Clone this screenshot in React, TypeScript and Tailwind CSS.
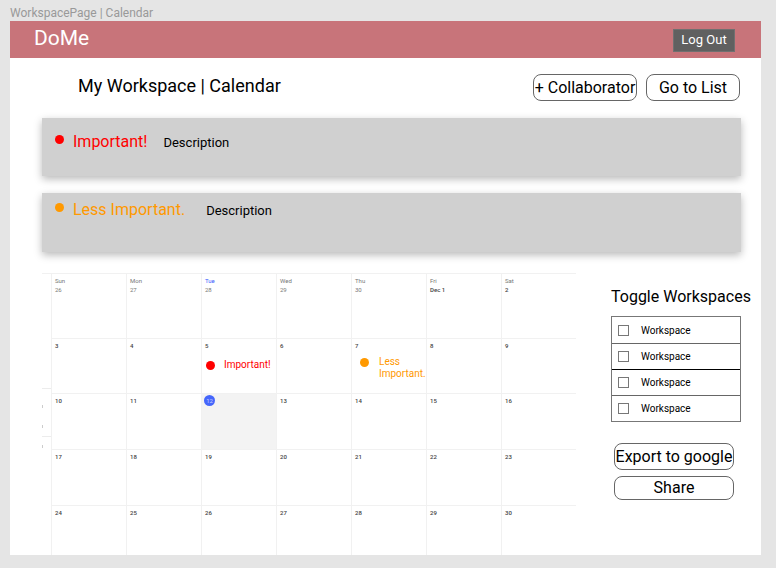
import React from "react";

type CalendarEvent = { kind: "important" | "less"; label: string };
type Day = {
  date: string;
  weekday?: string;
  muted?: boolean;
  today?: boolean;
  highlight?: boolean;
  event?: CalendarEvent;
};

const weeks: Day[][] = [
  [
    { weekday: "Sun", date: "26", muted: true },
    { weekday: "Mon", date: "27", muted: true },
    { weekday: "Tue", date: "28", muted: true, highlight: true },
    { weekday: "Wed", date: "29", muted: true },
    { weekday: "Thu", date: "30", muted: true },
    { weekday: "Fri", date: "Dec 1" },
    { weekday: "Sat", date: "2" },
  ],
  [
    { date: "3" },
    { date: "4" },
    { date: "5", event: { kind: "important", label: "Important!" } },
    { date: "6" },
    { date: "7", event: { kind: "less", label: "Less Important." } },
    { date: "8" },
    { date: "9" },
  ],
  [
    { date: "10" },
    { date: "11" },
    { date: "12", today: true },
    { date: "13" },
    { date: "14" },
    { date: "15" },
    { date: "16" },
  ],
  ["17", "18", "19", "20", "21", "22", "23"].map((date) => ({ date })),
  ["24", "25", "26", "27", "28", "29", "30"].map((date) => ({ date })),
];

const rowHeights = ["h-[65px]", "h-[55px]", "h-[56px]", "h-[56px]", "h-[50px]"];

function EventTag({ event }: { event: CalendarEvent }) {
  const important = event.kind === "important";
  return (
    <div
      className={
        important
          ? "flex items-center gap-[9px] pl-1 pt-[9px] text-[#ff0000]"
          : "flex items-start gap-[10px] pl-2 pt-[6px] text-[#ff9900]"
      }
    >
      <span
        className={
          important
            ? "size-[9px] shrink-0 rounded-full bg-[#ff0000]"
            : "mt-[2px] size-[9px] shrink-0 rounded-full bg-[#ff9900]"
        }
      />
      <span className="w-[50px] text-[10px] leading-[12px]">{event.label}</span>
    </div>
  );
}

function DayCell({ day }: { day: Day }) {
  return (
    <td
      className={`border-l border-t border-[#f1f1f1] p-0 align-top ${day.today ? "bg-[#f3f3f3]" : ""}`}
    >
      <div className="flex flex-col pt-[2px] text-[6px] leading-[9px] text-[#444444]">
        {day.weekday && (
          <span className={`pl-[3px] ${day.highlight ? "text-[#3b5bfd]" : "text-[#777777]"}`}>
            {day.weekday}
          </span>
        )}
        {day.today ? (
          <span className="-mt-px ml-[2px] flex size-[11px] items-center justify-center rounded-full bg-[#4566fb] text-[#c5d0ff]">
            {day.date}
          </span>
        ) : (
          <span className={`pl-[3px] ${day.muted ? "text-[#777777]" : "font-medium"}`}>{day.date}</span>
        )}
        {day.event && <EventTag event={day.event} />}
      </div>
    </td>
  );
}

function Calendar() {
  return (
    <div className="flex min-w-0 flex-1">
      <div className="w-[9px] shrink-0 border-t border-[#f1f1f1]">
        <div className="h-[115px] border-b border-[#ececec]" />
        <div className="flex h-12 flex-col justify-around border-b border-[#ececec] pt-2">
          <span className="h-[3px] w-px bg-[#cccccc]" />
          <span className="h-[3px] w-px bg-[#cccccc]" />
        </div>
        <div className="pt-2">
          <span className="block h-[3px] w-px bg-[#cccccc]" />
        </div>
      </div>
      <table className="w-full flex-1 table-fixed border-separate border-spacing-0">
        <tbody>
          {weeks.map((week, index) => (
            <tr key={index} className={rowHeights[index]}>
              {week.map((day) => (
                <DayCell key={day.date} day={day} />
              ))}
            </tr>
          ))}
        </tbody>
      </table>
    </div>
  );
}

function Notice({ kind, label }: { kind: "important" | "less"; label: string }) {
  const important = kind === "important";
  return (
    <section
      className={`flex items-start bg-[#d0d0d0] pl-[13px] shadow-[0_3px_8px_rgba(0,0,0,0.28)] ${
        important ? "h-[58px] pt-[14px]" : "h-[59px] pt-[7px]"
      }`}
    >
      <span
        className={`mt-[3px] size-[9px] rounded-full ${important ? "bg-[#ff0000]" : "bg-[#ff9900]"}`}
      />
      <h2
        className={`ml-[9px] text-[16px] leading-[20px] ${
          important ? "mr-4 text-[#ff0000]" : "mr-[21px] text-[#ff9900]"
        }`}
      >
        {label}
      </h2>
      <p className="text-[13px] leading-[22px]">Description</p>
    </section>
  );
}

function OutlineButton({ className, children }: { className: string; children: React.ReactNode }) {
  return (
    <button
      type="button"
      className={`flex items-center justify-center whitespace-nowrap rounded-lg border border-[#666666] bg-white text-[16px] ${className}`}
    >
      {children}
    </button>
  );
}

function WorkspaceToggles() {
  return (
    <aside className="w-[130px] shrink-0 pt-[14px]">
      <h2 className="whitespace-nowrap text-[16px] leading-[20px]">Toggle Workspaces</h2>
      <ul className="mt-[9px] border border-[#777777]">
        {[1, 2, 3, 4].map((id) => (
          <li
            key={id}
            className={`h-[26px] ${id === 3 ? "border-t border-black" : id > 1 ? "border-t border-[#666666]" : ""}`}
          >
            <label className="flex h-full items-center gap-3 pl-[6px] text-[10px]">
              <input
                type="checkbox"
                className="size-[11px] appearance-none border border-[#777777] bg-white checked:bg-[#777777]"
              />
              Workspace
            </label>
          </li>
        ))}
      </ul>
      <div className="ml-[3px] mt-[21px] flex w-[120px] flex-col gap-[6px]">
        <OutlineButton className="h-[27px]">Export to google</OutlineButton>
        <OutlineButton className="h-6">Share</OutlineButton>
      </div>
    </aside>
  );
}

export default function App() {
  return (
    <div className="min-h-screen bg-[#e5e5e5] pb-[13px] pl-[10px] pr-[15px] pt-[5px] font-[Roboto,sans-serif] text-black">
      <p className="text-[12px] leading-[16px] text-[#999999]">WorkspacePage | Calendar</p>
      <div className="bg-white">
        <header className="flex h-[37px] items-start justify-between bg-[#c8747a] pl-6 pr-[26px]">
          <span className="text-[21px] leading-[34px] text-white">DoMe</span>
          <button
            type="button"
            className="mt-2 h-[23px] w-[62px] border border-[#707070] bg-[#606060] pb-[2px] text-[13px] leading-[20px] text-white"
          >
            Log Out
          </button>
        </header>
        <main className="pl-8 pr-5 pt-4">
          <div className="flex items-center justify-between pr-px">
            <h1 className="pb-[5px] pl-9 text-[18px] leading-[21px]">My Workspace | Calendar</h1>
            <div className="flex gap-[9px]">
              <OutlineButton className="h-[27px] w-[104px]">+ Collaborator</OutlineButton>
              <OutlineButton className="h-[27px] w-[94px]">Go to List</OutlineButton>
            </div>
          </div>
          <div className="mt-[17px] flex flex-col gap-[17px]">
            <Notice kind="important" label="Important!" />
            <Notice kind="less" label="Less Important." />
          </div>
          <div className="mt-[21px] flex gap-[35px]">
            <Calendar />
            <WorkspaceToggles />
          </div>
        </main>
      </div>
    </div>
  );
}
